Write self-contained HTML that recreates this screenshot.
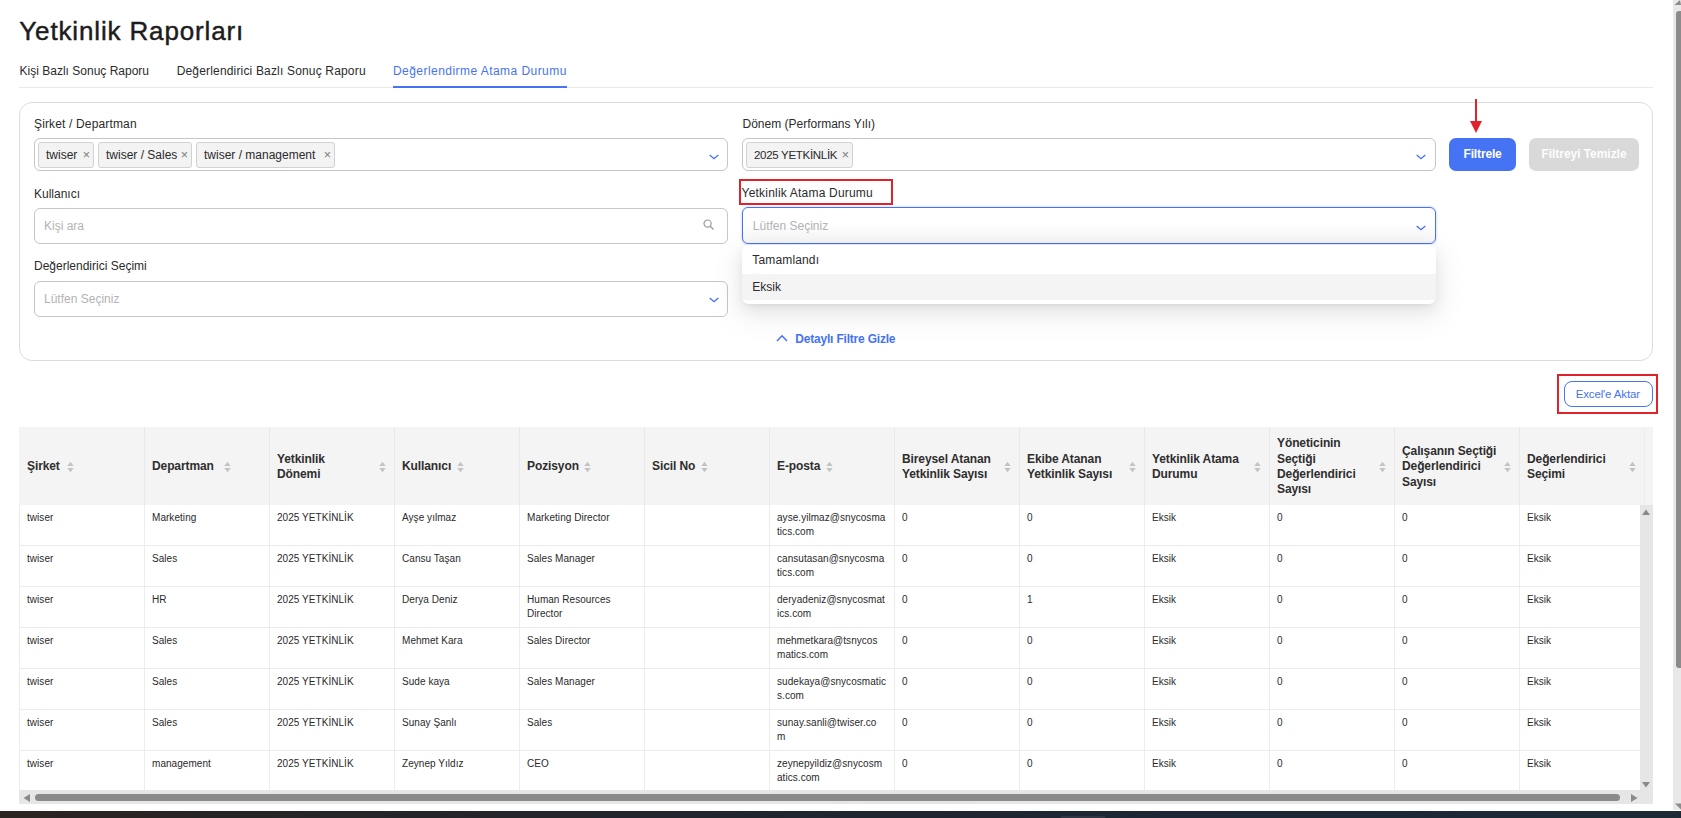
<!DOCTYPE html>
<html><head><meta charset="utf-8"><title>Yetkinlik Raporları</title>
<style>
html,body{margin:0;padding:0;background:#fff;width:1681px;height:818px;overflow:hidden;position:relative;font-family:"Liberation Sans",sans-serif}
.abs{position:absolute;box-sizing:content-box}
.t{position:absolute;white-space:nowrap;font-family:"Liberation Sans",sans-serif}
.inp{border:1px solid #c6c6c6;border-radius:6px;background:#fff}
.chip{border:1px solid #d2d2d2;border-radius:3px;background:#f3f3f3;box-sizing:border-box}
</style></head><body>
<div class="t" style="left:19.3px;top:14.59px;font-size:26px;line-height:32px;color:#1c1c1c;font-weight:400;letter-spacing:0.85px;-webkit-text-stroke:0.45px #1c1c1c;">Yetkinlik Raporları</div>
<div class="t" style="left:19.6px;top:62.64px;font-size:12px;line-height:16px;color:#2b2b2b;font-weight:400;">Kişi Bazlı Sonuç Raporu</div>
<div class="t" style="left:176.7px;top:62.64px;font-size:12px;line-height:16px;color:#2b2b2b;font-weight:400;letter-spacing:0.17px;">Değerlendirici Bazlı Sonuç Raporu</div>
<div class="t" style="left:393.0px;top:62.64px;font-size:12px;line-height:16px;color:#4673f3;font-weight:400;letter-spacing:0.45px;">Değerlendirme Atama Durumu</div>
<div class="abs" style="left:19px;top:87px;width:1634px;height:1px;background:#e9e9e9"></div>
<div class="abs" style="left:393px;top:86px;width:174px;height:2px;background:#4673f3"></div>
<div class="abs" style="left:19px;top:102px;width:1632px;height:257px;border:1px solid #dcdcdc;border-radius:13px;background:#fff"></div>
<div class="t" style="left:34.0px;top:115.64px;font-size:12px;line-height:16px;color:#2b2b2b;font-weight:400;letter-spacing:0.15px;">Şirket / Departman</div>
<div class="t" style="left:742.5px;top:115.84px;font-size:12px;line-height:16px;color:#2b2b2b;font-weight:400;">Dönem (Performans Yılı)</div>
<div class="abs inp" style="left:34px;top:138px;width:692px;height:31px"></div>
<div class="abs chip" style="left:38px;top:142px;width:56px;height:25.5px"></div>
<div class="t" style="left:46.0px;top:147.24px;font-size:12px;line-height:16px;color:#2a2a2a;font-weight:400;letter-spacing:0px;">twiser</div>
<div class="t" style="left:82.7px;top:147px;font-size:12.5px;line-height:16px;color:#7a7a7a">×</div>
<div class="abs chip" style="left:98px;top:142px;width:94px;height:25.5px"></div>
<div class="t" style="left:106.0px;top:147.24px;font-size:12px;line-height:16px;color:#2a2a2a;font-weight:400;letter-spacing:0px;">twiser / Sales</div>
<div class="t" style="left:180.7px;top:147px;font-size:12.5px;line-height:16px;color:#7a7a7a">×</div>
<div class="abs chip" style="left:196px;top:142px;width:139px;height:25.5px"></div>
<div class="t" style="left:204.0px;top:147.24px;font-size:12px;line-height:16px;color:#2a2a2a;font-weight:400;letter-spacing:0px;">twiser / management</div>
<div class="t" style="left:323.7px;top:147px;font-size:12.5px;line-height:16px;color:#7a7a7a">×</div>
<svg class="abs" style="left:709px;top:153px" width="11" height="7" viewBox="0 0 11 7"><path d="M0.7 1.9 L5 5.7 L9.3 1.9" fill="none" stroke="#4673f3" stroke-width="1.35"/></svg>
<div class="abs inp" style="left:742px;top:138px;width:692px;height:31px"></div>
<div class="abs chip" style="left:746px;top:142px;width:107px;height:25.5px"></div>
<div class="t" style="left:754.0px;top:147.42px;font-size:11.5px;line-height:16px;color:#2a2a2a;font-weight:400;letter-spacing:-0.3px;">2025 YETKİNLİK</div>
<div class="t" style="left:841.7px;top:147px;font-size:12.5px;line-height:16px;color:#7a7a7a">×</div>
<svg class="abs" style="left:1416px;top:153px" width="11" height="7" viewBox="0 0 11 7"><path d="M0.7 1.9 L5 5.7 L9.3 1.9" fill="none" stroke="#4673f3" stroke-width="1.35"/></svg>
<div class="abs" style="left:1449px;top:138px;width:67px;height:33px;background:#4673f3;border-radius:7px"></div>
<div class="t" style="left:1463.5px;top:146.04px;font-size:12px;line-height:16px;color:#fff;font-weight:700;letter-spacing:-0.15px;">Filtrele</div>
<div class="abs" style="left:1529px;top:138px;width:110px;height:33px;background:#d9d9d9;border-radius:7px"></div>
<div class="t" style="left:1541.5px;top:146.04px;font-size:12px;line-height:16px;color:#fdfdfd;font-weight:700;letter-spacing:-0.05px;">Filtreyi Temizle</div>
<svg class="abs" style="left:1468px;top:98px" width="16" height="37" viewBox="0 0 16 37"><line x1="8" y1="1" x2="8" y2="25" stroke="#e3222a" stroke-width="2"/><path d="M2 23 L14 23 L8 35 Z" fill="#e3222a"/></svg>
<div class="t" style="left:34.0px;top:186.14px;font-size:12px;line-height:16px;color:#2b2b2b;font-weight:400;">Kullanıcı</div>
<div class="abs inp" style="left:34px;top:208px;width:692px;height:34px"></div>
<div class="t" style="left:44.0px;top:217.64px;font-size:12px;line-height:16px;color:#b3b3b3;font-weight:400;">Kişi ara</div>
<svg class="abs" style="left:703px;top:219px" width="12" height="12" viewBox="0 0 12 12"><circle cx="4.6" cy="4.6" r="3.6" fill="none" stroke="#9a9a9a" stroke-width="1.2"/><line x1="7.3" y1="7.3" x2="10.5" y2="10.5" stroke="#9a9a9a" stroke-width="1.3"/></svg>
<div class="t" style="left:741.6px;top:185.04px;font-size:12px;line-height:16px;color:#2b2b2b;font-weight:400;letter-spacing:0.2px;">Yetkinlik Atama Durumu</div>
<div class="abs" style="left:739px;top:179px;width:150px;height:22px;border:2px solid #e0222b"></div>
<div class="abs" style="left:742px;top:207px;width:692px;height:35px;border:1px solid #4673f3;border-radius:6px;background:linear-gradient(#fff 40%,#f6f6f6);box-shadow:0 0 0 1.5px rgba(70,115,243,0.12)"></div>
<div class="t" style="left:752.8px;top:217.64px;font-size:12px;line-height:16px;color:#b3b3b3;font-weight:400;">Lütfen Seçiniz</div>
<svg class="abs" style="left:1416px;top:224px" width="11" height="7" viewBox="0 0 11 7"><path d="M0.7 1.9 L5 5.7 L9.3 1.9" fill="none" stroke="#4673f3" stroke-width="1.35"/></svg>
<div class="t" style="left:34.0px;top:258.14px;font-size:12px;line-height:16px;color:#2b2b2b;font-weight:400;">Değerlendirici Seçimi</div>
<div class="abs inp" style="left:34px;top:281px;width:692px;height:34px"></div>
<div class="t" style="left:44.0px;top:291.14px;font-size:12px;line-height:16px;color:#b3b3b3;font-weight:400;">Lütfen Seçiniz</div>
<svg class="abs" style="left:709px;top:296px" width="11" height="7" viewBox="0 0 11 7"><path d="M0.7 1.9 L5 5.7 L9.3 1.9" fill="none" stroke="#4673f3" stroke-width="1.35"/></svg>
<svg class="abs" style="left:776px;top:334px" width="12" height="8" viewBox="0 0 12 8"><path d="M1 7 L6 1.8 L11 7" fill="none" stroke="#4673f3" stroke-width="1.5"/></svg>
<div class="t" style="left:795.3px;top:330.54px;font-size:12px;line-height:16px;color:#4673f3;font-weight:700;letter-spacing:-0.2px;">Detaylı Filtre Gizle</div>
<div class="abs" style="left:742px;top:245px;width:694px;height:59px;background:#fff;border-radius:7px;box-shadow:0 6px 16px 0 rgba(0,0,0,0.08),0 3px 6px -4px rgba(0,0,0,0.12),0 9px 28px 8px rgba(0,0,0,0.05)"></div>
<div class="abs" style="left:742px;top:274px;width:694px;height:26px;background:#f4f4f4"></div>
<div class="t" style="left:752.3px;top:252.14px;font-size:12px;line-height:16px;color:#2b2b2b;font-weight:400;letter-spacing:0.15px;">Tamamlandı</div>
<div class="t" style="left:752.3px;top:279.14px;font-size:12px;line-height:16px;color:#2b2b2b;font-weight:400;">Eksik</div>
<div class="abs" style="left:1557px;top:374px;width:97px;height:36px;border:2px solid #e0222b"></div>
<div class="abs" style="left:1564px;top:381px;width:87px;height:24px;border:1px solid #4673f3;border-radius:8px;background:#fff"></div>
<div class="t" style="left:1575.7px;top:387.02px;font-size:11.5px;line-height:15px;color:#4673f3;font-weight:400;letter-spacing:-0.15px;">Excel&#39;e Aktar</div>
<div class="abs" style="left:19px;top:427px;width:1634px;height:77.60000000000002px;background:#f4f4f4"></div>
<div class="abs" style="left:144px;top:427px;width:1px;height:77.60000000000002px;background:#e9e9e9"></div>
<div class="abs" style="left:269px;top:427px;width:1px;height:77.60000000000002px;background:#e9e9e9"></div>
<div class="abs" style="left:394px;top:427px;width:1px;height:77.60000000000002px;background:#e9e9e9"></div>
<div class="abs" style="left:519px;top:427px;width:1px;height:77.60000000000002px;background:#e9e9e9"></div>
<div class="abs" style="left:644px;top:427px;width:1px;height:77.60000000000002px;background:#e9e9e9"></div>
<div class="abs" style="left:769px;top:427px;width:1px;height:77.60000000000002px;background:#e9e9e9"></div>
<div class="abs" style="left:894px;top:427px;width:1px;height:77.60000000000002px;background:#e9e9e9"></div>
<div class="abs" style="left:1019px;top:427px;width:1px;height:77.60000000000002px;background:#e9e9e9"></div>
<div class="abs" style="left:1144px;top:427px;width:1px;height:77.60000000000002px;background:#e9e9e9"></div>
<div class="abs" style="left:1269px;top:427px;width:1px;height:77.60000000000002px;background:#e9e9e9"></div>
<div class="abs" style="left:1394px;top:427px;width:1px;height:77.60000000000002px;background:#e9e9e9"></div>
<div class="abs" style="left:1519px;top:427px;width:1px;height:77.60000000000002px;background:#e9e9e9"></div>
<div class="abs" style="left:1644px;top:427px;width:1px;height:77.60000000000002px;background:#ececec"></div>
<div class="t" style="left:27.0px;top:459.35px;font-size:12px;line-height:15.3px;color:#2e2e2e;font-weight:700;letter-spacing:-0.1px;">Şirket</div>
<div class="t" style="left:152.0px;top:459.35px;font-size:12px;line-height:15.3px;color:#2e2e2e;font-weight:700;letter-spacing:-0.1px;">Departman</div>
<div class="t" style="left:277.0px;top:451.70px;font-size:12px;line-height:15.3px;color:#2e2e2e;font-weight:700;letter-spacing:-0.1px;">Yetkinlik</div>
<div class="t" style="left:277.0px;top:467.00px;font-size:12px;line-height:15.3px;color:#2e2e2e;font-weight:700;letter-spacing:-0.1px;">Dönemi</div>
<svg class="abs" style="left:379.4px;top:460.5px" width="7" height="12" viewBox="0 0 7 12"><path d="M0.3 5 L3.5 0.8 L6.7 5 Z M0.3 7 L3.5 11.2 L6.7 7 Z" fill="#c3c3c3"/></svg>
<div class="t" style="left:402.0px;top:459.35px;font-size:12px;line-height:15.3px;color:#2e2e2e;font-weight:700;letter-spacing:-0.1px;">Kullanıcı</div>
<div class="t" style="left:527.0px;top:459.35px;font-size:12px;line-height:15.3px;color:#2e2e2e;font-weight:700;letter-spacing:-0.1px;">Pozisyon</div>
<div class="t" style="left:652.0px;top:459.35px;font-size:12px;line-height:15.3px;color:#2e2e2e;font-weight:700;letter-spacing:-0.1px;">Sicil No</div>
<div class="t" style="left:777.0px;top:459.35px;font-size:12px;line-height:15.3px;color:#2e2e2e;font-weight:700;letter-spacing:-0.1px;">E-posta</div>
<div class="t" style="left:902.0px;top:451.70px;font-size:12px;line-height:15.3px;color:#2e2e2e;font-weight:700;letter-spacing:-0.1px;">Bireysel Atanan</div>
<div class="t" style="left:902.0px;top:467.00px;font-size:12px;line-height:15.3px;color:#2e2e2e;font-weight:700;letter-spacing:-0.1px;">Yetkinlik Sayısı</div>
<svg class="abs" style="left:1004.4px;top:460.5px" width="7" height="12" viewBox="0 0 7 12"><path d="M0.3 5 L3.5 0.8 L6.7 5 Z M0.3 7 L3.5 11.2 L6.7 7 Z" fill="#c3c3c3"/></svg>
<div class="t" style="left:1027.0px;top:451.70px;font-size:12px;line-height:15.3px;color:#2e2e2e;font-weight:700;letter-spacing:-0.1px;">Ekibe Atanan</div>
<div class="t" style="left:1027.0px;top:467.00px;font-size:12px;line-height:15.3px;color:#2e2e2e;font-weight:700;letter-spacing:-0.1px;">Yetkinlik Sayısı</div>
<svg class="abs" style="left:1129.4px;top:460.5px" width="7" height="12" viewBox="0 0 7 12"><path d="M0.3 5 L3.5 0.8 L6.7 5 Z M0.3 7 L3.5 11.2 L6.7 7 Z" fill="#c3c3c3"/></svg>
<div class="t" style="left:1152.0px;top:451.70px;font-size:12px;line-height:15.3px;color:#2e2e2e;font-weight:700;letter-spacing:-0.1px;">Yetkinlik Atama</div>
<div class="t" style="left:1152.0px;top:467.00px;font-size:12px;line-height:15.3px;color:#2e2e2e;font-weight:700;letter-spacing:-0.1px;">Durumu</div>
<svg class="abs" style="left:1254.4px;top:460.5px" width="7" height="12" viewBox="0 0 7 12"><path d="M0.3 5 L3.5 0.8 L6.7 5 Z M0.3 7 L3.5 11.2 L6.7 7 Z" fill="#c3c3c3"/></svg>
<div class="t" style="left:1277.0px;top:436.40px;font-size:12px;line-height:15.3px;color:#2e2e2e;font-weight:700;letter-spacing:-0.1px;">Yöneticinin</div>
<div class="t" style="left:1277.0px;top:451.70px;font-size:12px;line-height:15.3px;color:#2e2e2e;font-weight:700;letter-spacing:-0.1px;">Seçtiği</div>
<div class="t" style="left:1277.0px;top:467.00px;font-size:12px;line-height:15.3px;color:#2e2e2e;font-weight:700;letter-spacing:-0.1px;">Değerlendirici</div>
<div class="t" style="left:1277.0px;top:482.30px;font-size:12px;line-height:15.3px;color:#2e2e2e;font-weight:700;letter-spacing:-0.1px;">Sayısı</div>
<svg class="abs" style="left:1379.4px;top:460.5px" width="7" height="12" viewBox="0 0 7 12"><path d="M0.3 5 L3.5 0.8 L6.7 5 Z M0.3 7 L3.5 11.2 L6.7 7 Z" fill="#c3c3c3"/></svg>
<div class="t" style="left:1402.0px;top:444.05px;font-size:12px;line-height:15.3px;color:#2e2e2e;font-weight:700;letter-spacing:-0.1px;">Çalışanın Seçtiği</div>
<div class="t" style="left:1402.0px;top:459.35px;font-size:12px;line-height:15.3px;color:#2e2e2e;font-weight:700;letter-spacing:-0.1px;">Değerlendirici</div>
<div class="t" style="left:1402.0px;top:474.65px;font-size:12px;line-height:15.3px;color:#2e2e2e;font-weight:700;letter-spacing:-0.1px;">Sayısı</div>
<svg class="abs" style="left:1504.4px;top:460.5px" width="7" height="12" viewBox="0 0 7 12"><path d="M0.3 5 L3.5 0.8 L6.7 5 Z M0.3 7 L3.5 11.2 L6.7 7 Z" fill="#c3c3c3"/></svg>
<div class="t" style="left:1527.0px;top:451.70px;font-size:12px;line-height:15.3px;color:#2e2e2e;font-weight:700;letter-spacing:-0.1px;">Değerlendirici</div>
<div class="t" style="left:1527.0px;top:467.00px;font-size:12px;line-height:15.3px;color:#2e2e2e;font-weight:700;letter-spacing:-0.1px;">Seçimi</div>
<svg class="abs" style="left:1629.4px;top:460.5px" width="7" height="12" viewBox="0 0 7 12"><path d="M0.3 5 L3.5 0.8 L6.7 5 Z M0.3 7 L3.5 11.2 L6.7 7 Z" fill="#c3c3c3"/></svg>
<svg class="abs" style="left:67.2px;top:460.5px" width="7" height="12" viewBox="0 0 7 12"><path d="M0.3 5 L3.5 0.8 L6.7 5 Z M0.3 7 L3.5 11.2 L6.7 7 Z" fill="#c3c3c3"/></svg>
<svg class="abs" style="left:223.9px;top:460.5px" width="7" height="12" viewBox="0 0 7 12"><path d="M0.3 5 L3.5 0.8 L6.7 5 Z M0.3 7 L3.5 11.2 L6.7 7 Z" fill="#c3c3c3"/></svg>
<svg class="abs" style="left:457.0px;top:460.5px" width="7" height="12" viewBox="0 0 7 12"><path d="M0.3 5 L3.5 0.8 L6.7 5 Z M0.3 7 L3.5 11.2 L6.7 7 Z" fill="#c3c3c3"/></svg>
<svg class="abs" style="left:583.8px;top:460.5px" width="7" height="12" viewBox="0 0 7 12"><path d="M0.3 5 L3.5 0.8 L6.7 5 Z M0.3 7 L3.5 11.2 L6.7 7 Z" fill="#c3c3c3"/></svg>
<svg class="abs" style="left:700.6px;top:460.5px" width="7" height="12" viewBox="0 0 7 12"><path d="M0.3 5 L3.5 0.8 L6.7 5 Z M0.3 7 L3.5 11.2 L6.7 7 Z" fill="#c3c3c3"/></svg>
<svg class="abs" style="left:825.7px;top:460.5px" width="7" height="12" viewBox="0 0 7 12"><path d="M0.3 5 L3.5 0.8 L6.7 5 Z M0.3 7 L3.5 11.2 L6.7 7 Z" fill="#c3c3c3"/></svg>
<div class="abs" style="left:19px;top:504.6px;width:1621px;height:285.4px;overflow:hidden;background:#fff">
<div class="abs" style="left:0;top:40.00px;width:1621px;height:1px;background:#ececec"></div>
<div class="t" style="left:8.0px;top:6.43px;font-size:10px;line-height:13px;color:#2a2a2a;font-weight:400;letter-spacing:0.05px;">twiser</div>
<div class="t" style="left:133.0px;top:6.43px;font-size:10px;line-height:13px;color:#2a2a2a;font-weight:400;letter-spacing:0.05px;">Marketing</div>
<div class="t" style="left:258.0px;top:6.43px;font-size:10px;line-height:13px;color:#2a2a2a;font-weight:400;letter-spacing:0.05px;">2025 YETKİNLİK</div>
<div class="t" style="left:383.0px;top:6.43px;font-size:10px;line-height:13px;color:#2a2a2a;font-weight:400;letter-spacing:0.05px;">Ayşe yılmaz</div>
<div class="t" style="left:508.0px;top:6.43px;font-size:10px;line-height:13px;color:#2a2a2a;font-weight:400;letter-spacing:0.05px;">Marketing Director</div>
<div class="t" style="left:758.0px;top:6.43px;font-size:10px;line-height:13px;color:#2a2a2a;font-weight:400;letter-spacing:0.05px;">ayse.yilmaz@snycosma</div>
<div class="t" style="left:758.0px;top:20.54px;font-size:10px;line-height:13px;color:#2a2a2a;font-weight:400;letter-spacing:0.05px;">tics.com</div>
<div class="t" style="left:883.0px;top:6.43px;font-size:10px;line-height:13px;color:#2a2a2a;font-weight:400;letter-spacing:0.05px;">0</div>
<div class="t" style="left:1008.0px;top:6.43px;font-size:10px;line-height:13px;color:#2a2a2a;font-weight:400;letter-spacing:0.05px;">0</div>
<div class="t" style="left:1133.0px;top:6.43px;font-size:10px;line-height:13px;color:#2a2a2a;font-weight:400;letter-spacing:0.05px;">Eksik</div>
<div class="t" style="left:1258.0px;top:6.43px;font-size:10px;line-height:13px;color:#2a2a2a;font-weight:400;letter-spacing:0.05px;">0</div>
<div class="t" style="left:1383.0px;top:6.43px;font-size:10px;line-height:13px;color:#2a2a2a;font-weight:400;letter-spacing:0.05px;">0</div>
<div class="t" style="left:1508.0px;top:6.43px;font-size:10px;line-height:13px;color:#2a2a2a;font-weight:400;letter-spacing:0.05px;">Eksik</div>
<div class="abs" style="left:0;top:81.00px;width:1621px;height:1px;background:#ececec"></div>
<div class="t" style="left:8.0px;top:47.44px;font-size:10px;line-height:13px;color:#2a2a2a;font-weight:400;letter-spacing:0.05px;">twiser</div>
<div class="t" style="left:133.0px;top:47.44px;font-size:10px;line-height:13px;color:#2a2a2a;font-weight:400;letter-spacing:0.05px;">Sales</div>
<div class="t" style="left:258.0px;top:47.44px;font-size:10px;line-height:13px;color:#2a2a2a;font-weight:400;letter-spacing:0.05px;">2025 YETKİNLİK</div>
<div class="t" style="left:383.0px;top:47.44px;font-size:10px;line-height:13px;color:#2a2a2a;font-weight:400;letter-spacing:0.05px;">Cansu Taşan</div>
<div class="t" style="left:508.0px;top:47.44px;font-size:10px;line-height:13px;color:#2a2a2a;font-weight:400;letter-spacing:0.05px;">Sales Manager</div>
<div class="t" style="left:758.0px;top:47.44px;font-size:10px;line-height:13px;color:#2a2a2a;font-weight:400;letter-spacing:0.05px;">cansutasan@snycosma</div>
<div class="t" style="left:758.0px;top:61.53px;font-size:10px;line-height:13px;color:#2a2a2a;font-weight:400;letter-spacing:0.05px;">tics.com</div>
<div class="t" style="left:883.0px;top:47.44px;font-size:10px;line-height:13px;color:#2a2a2a;font-weight:400;letter-spacing:0.05px;">0</div>
<div class="t" style="left:1008.0px;top:47.44px;font-size:10px;line-height:13px;color:#2a2a2a;font-weight:400;letter-spacing:0.05px;">0</div>
<div class="t" style="left:1133.0px;top:47.44px;font-size:10px;line-height:13px;color:#2a2a2a;font-weight:400;letter-spacing:0.05px;">Eksik</div>
<div class="t" style="left:1258.0px;top:47.44px;font-size:10px;line-height:13px;color:#2a2a2a;font-weight:400;letter-spacing:0.05px;">0</div>
<div class="t" style="left:1383.0px;top:47.44px;font-size:10px;line-height:13px;color:#2a2a2a;font-weight:400;letter-spacing:0.05px;">0</div>
<div class="t" style="left:1508.0px;top:47.44px;font-size:10px;line-height:13px;color:#2a2a2a;font-weight:400;letter-spacing:0.05px;">Eksik</div>
<div class="abs" style="left:0;top:122.00px;width:1621px;height:1px;background:#ececec"></div>
<div class="t" style="left:8.0px;top:88.44px;font-size:10px;line-height:13px;color:#2a2a2a;font-weight:400;letter-spacing:0.05px;">twiser</div>
<div class="t" style="left:133.0px;top:88.44px;font-size:10px;line-height:13px;color:#2a2a2a;font-weight:400;letter-spacing:0.05px;">HR</div>
<div class="t" style="left:258.0px;top:88.44px;font-size:10px;line-height:13px;color:#2a2a2a;font-weight:400;letter-spacing:0.05px;">2025 YETKİNLİK</div>
<div class="t" style="left:383.0px;top:88.44px;font-size:10px;line-height:13px;color:#2a2a2a;font-weight:400;letter-spacing:0.05px;">Derya Deniz</div>
<div class="t" style="left:508.0px;top:88.44px;font-size:10px;line-height:13px;color:#2a2a2a;font-weight:400;letter-spacing:0.05px;">Human Resources</div>
<div class="t" style="left:508.0px;top:102.53px;font-size:10px;line-height:13px;color:#2a2a2a;font-weight:400;letter-spacing:0.05px;">Director</div>
<div class="t" style="left:758.0px;top:88.44px;font-size:10px;line-height:13px;color:#2a2a2a;font-weight:400;letter-spacing:0.05px;">deryadeniz@snycosmat</div>
<div class="t" style="left:758.0px;top:102.53px;font-size:10px;line-height:13px;color:#2a2a2a;font-weight:400;letter-spacing:0.05px;">ics.com</div>
<div class="t" style="left:883.0px;top:88.44px;font-size:10px;line-height:13px;color:#2a2a2a;font-weight:400;letter-spacing:0.05px;">0</div>
<div class="t" style="left:1008.0px;top:88.44px;font-size:10px;line-height:13px;color:#2a2a2a;font-weight:400;letter-spacing:0.05px;">1</div>
<div class="t" style="left:1133.0px;top:88.44px;font-size:10px;line-height:13px;color:#2a2a2a;font-weight:400;letter-spacing:0.05px;">Eksik</div>
<div class="t" style="left:1258.0px;top:88.44px;font-size:10px;line-height:13px;color:#2a2a2a;font-weight:400;letter-spacing:0.05px;">0</div>
<div class="t" style="left:1383.0px;top:88.44px;font-size:10px;line-height:13px;color:#2a2a2a;font-weight:400;letter-spacing:0.05px;">0</div>
<div class="t" style="left:1508.0px;top:88.44px;font-size:10px;line-height:13px;color:#2a2a2a;font-weight:400;letter-spacing:0.05px;">Eksik</div>
<div class="abs" style="left:0;top:163.00px;width:1621px;height:1px;background:#ececec"></div>
<div class="t" style="left:8.0px;top:129.44px;font-size:10px;line-height:13px;color:#2a2a2a;font-weight:400;letter-spacing:0.05px;">twiser</div>
<div class="t" style="left:133.0px;top:129.44px;font-size:10px;line-height:13px;color:#2a2a2a;font-weight:400;letter-spacing:0.05px;">Sales</div>
<div class="t" style="left:258.0px;top:129.44px;font-size:10px;line-height:13px;color:#2a2a2a;font-weight:400;letter-spacing:0.05px;">2025 YETKİNLİK</div>
<div class="t" style="left:383.0px;top:129.44px;font-size:10px;line-height:13px;color:#2a2a2a;font-weight:400;letter-spacing:0.05px;">Mehmet Kara</div>
<div class="t" style="left:508.0px;top:129.44px;font-size:10px;line-height:13px;color:#2a2a2a;font-weight:400;letter-spacing:0.05px;">Sales Director</div>
<div class="t" style="left:758.0px;top:129.44px;font-size:10px;line-height:13px;color:#2a2a2a;font-weight:400;letter-spacing:0.05px;">mehmetkara@tsnycos</div>
<div class="t" style="left:758.0px;top:143.53px;font-size:10px;line-height:13px;color:#2a2a2a;font-weight:400;letter-spacing:0.05px;">matics.com</div>
<div class="t" style="left:883.0px;top:129.44px;font-size:10px;line-height:13px;color:#2a2a2a;font-weight:400;letter-spacing:0.05px;">0</div>
<div class="t" style="left:1008.0px;top:129.44px;font-size:10px;line-height:13px;color:#2a2a2a;font-weight:400;letter-spacing:0.05px;">0</div>
<div class="t" style="left:1133.0px;top:129.44px;font-size:10px;line-height:13px;color:#2a2a2a;font-weight:400;letter-spacing:0.05px;">Eksik</div>
<div class="t" style="left:1258.0px;top:129.44px;font-size:10px;line-height:13px;color:#2a2a2a;font-weight:400;letter-spacing:0.05px;">0</div>
<div class="t" style="left:1383.0px;top:129.44px;font-size:10px;line-height:13px;color:#2a2a2a;font-weight:400;letter-spacing:0.05px;">0</div>
<div class="t" style="left:1508.0px;top:129.44px;font-size:10px;line-height:13px;color:#2a2a2a;font-weight:400;letter-spacing:0.05px;">Eksik</div>
<div class="abs" style="left:0;top:204.00px;width:1621px;height:1px;background:#ececec"></div>
<div class="t" style="left:8.0px;top:170.44px;font-size:10px;line-height:13px;color:#2a2a2a;font-weight:400;letter-spacing:0.05px;">twiser</div>
<div class="t" style="left:133.0px;top:170.44px;font-size:10px;line-height:13px;color:#2a2a2a;font-weight:400;letter-spacing:0.05px;">Sales</div>
<div class="t" style="left:258.0px;top:170.44px;font-size:10px;line-height:13px;color:#2a2a2a;font-weight:400;letter-spacing:0.05px;">2025 YETKİNLİK</div>
<div class="t" style="left:383.0px;top:170.44px;font-size:10px;line-height:13px;color:#2a2a2a;font-weight:400;letter-spacing:0.05px;">Sude kaya</div>
<div class="t" style="left:508.0px;top:170.44px;font-size:10px;line-height:13px;color:#2a2a2a;font-weight:400;letter-spacing:0.05px;">Sales Manager</div>
<div class="t" style="left:758.0px;top:170.44px;font-size:10px;line-height:13px;color:#2a2a2a;font-weight:400;letter-spacing:0.05px;">sudekaya@snycosmatic</div>
<div class="t" style="left:758.0px;top:184.53px;font-size:10px;line-height:13px;color:#2a2a2a;font-weight:400;letter-spacing:0.05px;">s.com</div>
<div class="t" style="left:883.0px;top:170.44px;font-size:10px;line-height:13px;color:#2a2a2a;font-weight:400;letter-spacing:0.05px;">0</div>
<div class="t" style="left:1008.0px;top:170.44px;font-size:10px;line-height:13px;color:#2a2a2a;font-weight:400;letter-spacing:0.05px;">0</div>
<div class="t" style="left:1133.0px;top:170.44px;font-size:10px;line-height:13px;color:#2a2a2a;font-weight:400;letter-spacing:0.05px;">Eksik</div>
<div class="t" style="left:1258.0px;top:170.44px;font-size:10px;line-height:13px;color:#2a2a2a;font-weight:400;letter-spacing:0.05px;">0</div>
<div class="t" style="left:1383.0px;top:170.44px;font-size:10px;line-height:13px;color:#2a2a2a;font-weight:400;letter-spacing:0.05px;">0</div>
<div class="t" style="left:1508.0px;top:170.44px;font-size:10px;line-height:13px;color:#2a2a2a;font-weight:400;letter-spacing:0.05px;">Eksik</div>
<div class="abs" style="left:0;top:245.00px;width:1621px;height:1px;background:#ececec"></div>
<div class="t" style="left:8.0px;top:211.44px;font-size:10px;line-height:13px;color:#2a2a2a;font-weight:400;letter-spacing:0.05px;">twiser</div>
<div class="t" style="left:133.0px;top:211.44px;font-size:10px;line-height:13px;color:#2a2a2a;font-weight:400;letter-spacing:0.05px;">Sales</div>
<div class="t" style="left:258.0px;top:211.44px;font-size:10px;line-height:13px;color:#2a2a2a;font-weight:400;letter-spacing:0.05px;">2025 YETKİNLİK</div>
<div class="t" style="left:383.0px;top:211.44px;font-size:10px;line-height:13px;color:#2a2a2a;font-weight:400;letter-spacing:0.05px;">Sunay Şanlı</div>
<div class="t" style="left:508.0px;top:211.44px;font-size:10px;line-height:13px;color:#2a2a2a;font-weight:400;letter-spacing:0.05px;">Sales</div>
<div class="t" style="left:758.0px;top:211.44px;font-size:10px;line-height:13px;color:#2a2a2a;font-weight:400;letter-spacing:0.05px;">sunay.sanli@twiser.co</div>
<div class="t" style="left:758.0px;top:225.53px;font-size:10px;line-height:13px;color:#2a2a2a;font-weight:400;letter-spacing:0.05px;">m</div>
<div class="t" style="left:883.0px;top:211.44px;font-size:10px;line-height:13px;color:#2a2a2a;font-weight:400;letter-spacing:0.05px;">0</div>
<div class="t" style="left:1008.0px;top:211.44px;font-size:10px;line-height:13px;color:#2a2a2a;font-weight:400;letter-spacing:0.05px;">0</div>
<div class="t" style="left:1133.0px;top:211.44px;font-size:10px;line-height:13px;color:#2a2a2a;font-weight:400;letter-spacing:0.05px;">Eksik</div>
<div class="t" style="left:1258.0px;top:211.44px;font-size:10px;line-height:13px;color:#2a2a2a;font-weight:400;letter-spacing:0.05px;">0</div>
<div class="t" style="left:1383.0px;top:211.44px;font-size:10px;line-height:13px;color:#2a2a2a;font-weight:400;letter-spacing:0.05px;">0</div>
<div class="t" style="left:1508.0px;top:211.44px;font-size:10px;line-height:13px;color:#2a2a2a;font-weight:400;letter-spacing:0.05px;">Eksik</div>
<div class="abs" style="left:0;top:286.00px;width:1621px;height:1px;background:#ececec"></div>
<div class="t" style="left:8.0px;top:252.43px;font-size:10px;line-height:13px;color:#2a2a2a;font-weight:400;letter-spacing:0.05px;">twiser</div>
<div class="t" style="left:133.0px;top:252.43px;font-size:10px;line-height:13px;color:#2a2a2a;font-weight:400;letter-spacing:0.05px;">management</div>
<div class="t" style="left:258.0px;top:252.43px;font-size:10px;line-height:13px;color:#2a2a2a;font-weight:400;letter-spacing:0.05px;">2025 YETKİNLİK</div>
<div class="t" style="left:383.0px;top:252.43px;font-size:10px;line-height:13px;color:#2a2a2a;font-weight:400;letter-spacing:0.05px;">Zeynep Yıldız</div>
<div class="t" style="left:508.0px;top:252.43px;font-size:10px;line-height:13px;color:#2a2a2a;font-weight:400;letter-spacing:0.05px;">CEO</div>
<div class="t" style="left:758.0px;top:252.43px;font-size:10px;line-height:13px;color:#2a2a2a;font-weight:400;letter-spacing:0.05px;">zeynepyildiz@snycosm</div>
<div class="t" style="left:758.0px;top:266.54px;font-size:10px;line-height:13px;color:#2a2a2a;font-weight:400;letter-spacing:0.05px;">atics.com</div>
<div class="t" style="left:883.0px;top:252.43px;font-size:10px;line-height:13px;color:#2a2a2a;font-weight:400;letter-spacing:0.05px;">0</div>
<div class="t" style="left:1008.0px;top:252.43px;font-size:10px;line-height:13px;color:#2a2a2a;font-weight:400;letter-spacing:0.05px;">0</div>
<div class="t" style="left:1133.0px;top:252.43px;font-size:10px;line-height:13px;color:#2a2a2a;font-weight:400;letter-spacing:0.05px;">Eksik</div>
<div class="t" style="left:1258.0px;top:252.43px;font-size:10px;line-height:13px;color:#2a2a2a;font-weight:400;letter-spacing:0.05px;">0</div>
<div class="t" style="left:1383.0px;top:252.43px;font-size:10px;line-height:13px;color:#2a2a2a;font-weight:400;letter-spacing:0.05px;">0</div>
<div class="t" style="left:1508.0px;top:252.43px;font-size:10px;line-height:13px;color:#2a2a2a;font-weight:400;letter-spacing:0.05px;">Eksik</div>
<div class="abs" style="left:125px;top:0;width:1px;height:285.4px;background:#ececec"></div>
<div class="abs" style="left:250px;top:0;width:1px;height:285.4px;background:#ececec"></div>
<div class="abs" style="left:375px;top:0;width:1px;height:285.4px;background:#ececec"></div>
<div class="abs" style="left:500px;top:0;width:1px;height:285.4px;background:#ececec"></div>
<div class="abs" style="left:625px;top:0;width:1px;height:285.4px;background:#ececec"></div>
<div class="abs" style="left:750px;top:0;width:1px;height:285.4px;background:#ececec"></div>
<div class="abs" style="left:875px;top:0;width:1px;height:285.4px;background:#ececec"></div>
<div class="abs" style="left:1000px;top:0;width:1px;height:285.4px;background:#ececec"></div>
<div class="abs" style="left:1125px;top:0;width:1px;height:285.4px;background:#ececec"></div>
<div class="abs" style="left:1250px;top:0;width:1px;height:285.4px;background:#ececec"></div>
<div class="abs" style="left:1375px;top:0;width:1px;height:285.4px;background:#ececec"></div>
<div class="abs" style="left:1500px;top:0;width:1px;height:285.4px;background:#ececec"></div>
</div>
<div class="abs" style="left:19px;top:504.6px;width:1px;height:285.4px;background:#ececec"></div>
<div class="abs" style="left:1640px;top:504.6px;width:13px;height:285.4px;background:#e6e6e6"></div>
<svg class="abs" style="left:1641px;top:508px" width="10" height="8" viewBox="0 0 10 8"><path d="M1 7 L5 1.5 L9 7 Z" fill="#8a8a8a"/></svg>
<svg class="abs" style="left:1641px;top:781px" width="10" height="8" viewBox="0 0 10 8"><path d="M1 1 L5 6.5 L9 1 Z" fill="#8a8a8a"/></svg>
<div class="abs" style="left:19px;top:790px;width:1634px;height:13.6px;background:#e6e6e6"></div>
<div class="abs" style="left:35px;top:794px;width:1585px;height:7px;background:#8a8a8a;border-radius:4px"></div>
<svg class="abs" style="left:22px;top:793px" width="9" height="10" viewBox="0 0 9 10"><path d="M8 1 L1.5 5 L8 9 Z" fill="#8a8a8a"/></svg>
<svg class="abs" style="left:1630px;top:793px" width="9" height="10" viewBox="0 0 9 10"><path d="M1 1 L7.5 5 L1 9 Z" fill="#8a8a8a"/></svg>
<div class="abs" style="left:1673px;top:0;width:8px;height:810px;background:#e8e8e8"></div>
<div class="abs" style="left:1676px;top:10.5px;width:6px;height:657.5px;background:#8b8b8b;border-radius:3px 0 0 3px"></div>
<svg class="abs" style="left:1674px;top:0" width="7" height="6" viewBox="0 0 7 6"><path d="M0.5 5 L6 0 L7 5 Z" fill="#8b8b8b"/></svg>
<svg class="abs" style="left:1675px;top:803px" width="6" height="7" viewBox="0 0 6 7"><path d="M0 0.5 L6 0.5 L6 6.5 Z" fill="#8b8b8b"/></svg>
<div class="abs" style="left:0;top:811px;width:1681px;height:7px;background:linear-gradient(90deg,#2a2422 0%,#22252d 40%,#1d2735 70%,#1c2a36 100%)"></div>
<div class="abs" style="left:1060px;top:816px;width:46px;height:6px;border-radius:3px;background:#2f3644"></div>
</body></html>
